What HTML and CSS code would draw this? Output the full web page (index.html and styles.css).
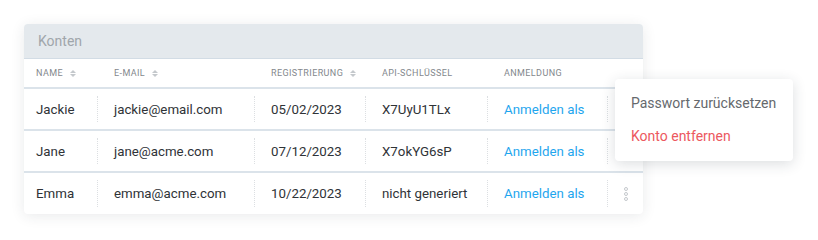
FILE: index.html
```html
<!DOCTYPE html>
<html lang="de">
<head>
    <meta charset="UTF-8">
    <meta name="viewport" content="width=device-width, initial-scale=1.0">
    <title>Konten</title>
    <link rel="stylesheet" href="styles.css">
</head>
<body>

<div class="stage">
    <div class="card">
        <div class="card-title">Konten</div>

        <div class="grid head">
            <div class="th first">Name <span class="sort"></span></div>
            <div class="th">E-Mail <span class="sort"></span></div>
            <div class="th">Registrierung <span class="sort"></span></div>
            <div class="th">API-Schlüssel</div>
            <div class="th">Anmeldung</div>
            <div class="th"></div>
        </div>

        <div class="grid row">
            <div class="td first">Jackie</div>
            <div class="td">jackie@email.com</div>
            <div class="td">05/02/2023</div>
            <div class="td">X7UyU1TLx</div>
            <div class="td"><a class="link" href="#">Anmelden als</a></div>
            <div class="td actions"><span class="kebab"><i></i><i></i><i></i></span></div>
        </div>

        <div class="grid row">
            <div class="td first">Jane</div>
            <div class="td">jane@acme.com</div>
            <div class="td">07/12/2023</div>
            <div class="td">X7okYG6sP</div>
            <div class="td"><a class="link" href="#">Anmelden als</a></div>
            <div class="td actions"><span class="kebab"><i></i><i></i><i></i></span></div>
        </div>

        <div class="grid row last">
            <div class="td first">Emma</div>
            <div class="td">emma@acme.com</div>
            <div class="td">10/22/2023</div>
            <div class="td">nicht generiert</div>
            <div class="td"><a class="link" href="#">Anmelden als</a></div>
            <div class="td actions"><span class="kebab"><i></i><i></i><i></i></span></div>
        </div>
    </div>

    <!-- dropdown for the first row -->
    <ul class="menu">
        <li>Passwort zurücksetzen</li>
        <li class="danger">Konto entfernen</li>
    </ul>
</div>

</body>
</html>
```

FILE: styles.css
```css
body {
    margin: 0;
    background: #ffffff;
    font-family: 'Roboto', 'Liberation Sans', sans-serif;
    color: #2f3337;
}

.stage {
    position: relative;
    padding: 24px;
    height: 192px;
}

.card {
    width: 619px;
    background: #ffffff;
    border-radius: 4px;
    box-shadow: 0 2px 14px rgba(40, 50, 60, 0.10);
    overflow: hidden;
}

.card-title {
    height: 34px;
    line-height: 34px;
    padding-left: 14px;
    background: #e4e9ed;
    border-bottom: 1px solid #d2dce5;
    font-size: 14px;
    color: #a0a6ab;
}

.grid {
    display: grid;
    grid-template-columns: 73px 157px 111px 122px 120px 1fr;
}

.head {
    height: 28px;
    border-bottom: 2px solid #dbe3ea;
}

.th {
    display: flex;
    align-items: center;
    padding-left: 17px;
    font-size: 9px;
    letter-spacing: 0.4px;
    text-transform: uppercase;
    color: #83888d;
}

.th.first {
    padding-left: 12px;
}

.sort {
    display: inline-block;
    width: 0;
    height: 0;
    margin-left: 7px;
    border-left: 3px solid transparent;
    border-right: 3px solid transparent;
    border-bottom: 3px solid #c4c8cc;
    position: relative;
    top: -2px;
}

.sort::after {
    content: '';
    position: absolute;
    left: -3px;
    top: 4px;
    border-left: 3px solid transparent;
    border-right: 3px solid transparent;
    border-top: 3px solid #c4c8cc;
}

.row {
    height: 40px;
    border-bottom: 2px solid #dbe3ea;
}

.row.last {
    height: 41px;
    border-bottom: none;
}

.td {
    display: flex;
    align-items: center;
    margin: 7px 0;
    padding-left: 16px;
    border-left: 1px dotted #dcdfe2;
    font-size: 13.3px;
    white-space: nowrap;
}

.td.first {
    padding-left: 12px;
    border-left: none;
}

.link {
    color: #1fa6ee;
    text-decoration: none;
}

.actions {
    padding-left: 16px;
}

.kebab {
    display: flex;
    flex-direction: column;
    gap: 1px;
}

.kebab i {
    display: block;
    width: 2px;
    height: 2px;
    border: 1px solid #c4c8cc;
    border-radius: 50%;
}

.menu {
    position: absolute;
    left: 615px;
    top: 79px;
    width: 178px;
    margin: 0;
    padding: 8px 0;
    list-style: none;
    background: #ffffff;
    border-radius: 4px;
    box-shadow: 0 3px 14px rgba(40, 50, 60, 0.16);
}

.menu li {
    height: 33px;
    line-height: 33px;
    padding-left: 16px;
    font-size: 14px;
    color: #65696d;
}

.menu li.danger {
    color: #ec5860;
}
```
